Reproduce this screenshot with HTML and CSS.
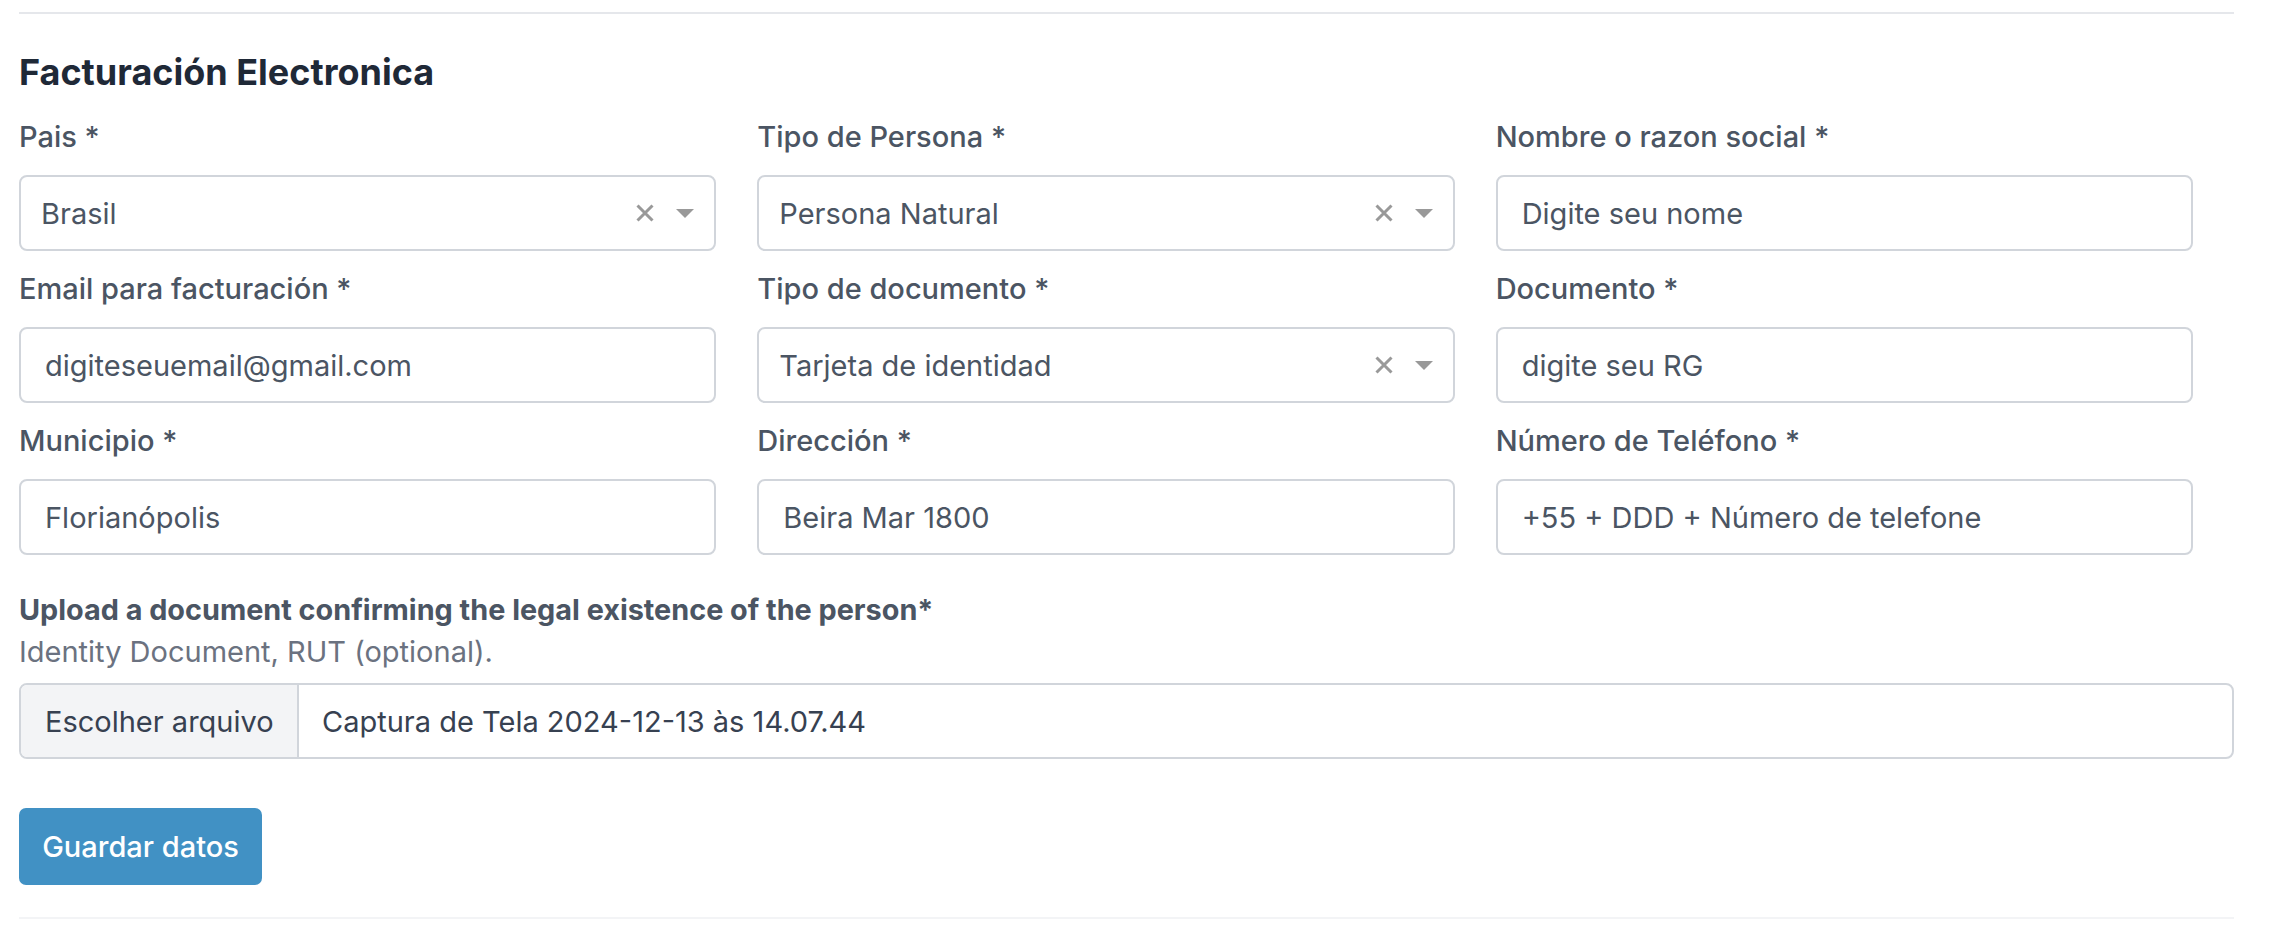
FILE: index.html
```html
<!DOCTYPE html>
<html lang="es">
<head>
    <meta charset="UTF-8">
    <meta name="viewport" content="width=device-width, initial-scale=1.0">
    <title>Facturación Electronica</title>
    <link rel="stylesheet" href="styles.css">
</head>
<body>
    <div class="container">
        <hr class="linea-top">

        <h2>Facturación Electronica</h2>

        <form class="form-factura" onsubmit="return false">
            <div class="grid">
                <!-- fila 1 -->
                <div class="campo">
                    <label>Pais *</label>
                    <div class="select">
                        <span class="select-valor">Brasil</span>
                        <svg class="select-limpiar" viewBox="0 0 18 18"><path d="M1.5 1.5L16.5 16.5M16.5 1.5L1.5 16.5"/></svg>
                        <span class="select-flecha"></span>
                    </div>
                </div>
                <div class="campo">
                    <label>Tipo de Persona *</label>
                    <div class="select">
                        <span class="select-valor">Persona Natural</span>
                        <svg class="select-limpiar" viewBox="0 0 18 18"><path d="M1.5 1.5L16.5 16.5M16.5 1.5L1.5 16.5"/></svg>
                        <span class="select-flecha"></span>
                    </div>
                </div>
                <div class="campo">
                    <label>Nombre o razon social *</label>
                    <input type="text" value="Digite seu nome">
                </div>

                <!-- fila 2 -->
                <div class="campo">
                    <label>Email para facturación *</label>
                    <input type="text" value="digiteseuemail@gmail.com">
                </div>
                <div class="campo">
                    <label>Tipo de documento *</label>
                    <div class="select">
                        <span class="select-valor">Tarjeta de identidad</span>
                        <svg class="select-limpiar" viewBox="0 0 18 18"><path d="M1.5 1.5L16.5 16.5M16.5 1.5L1.5 16.5"/></svg>
                        <span class="select-flecha"></span>
                    </div>
                </div>
                <div class="campo">
                    <label>Documento *</label>
                    <input type="text" value="digite seu RG">
                </div>

                <!-- fila 3 -->
                <div class="campo">
                    <label>Municipio *</label>
                    <input type="text" value="Florianópolis">
                </div>
                <div class="campo">
                    <label>Dirección *</label>
                    <input type="text" value="Beira Mar 1800">
                </div>
                <div class="campo">
                    <label>Número de Teléfono *</label>
                    <input type="text" value="+55 + DDD + Número de telefone">
                </div>
            </div>

            <div class="upload">
                <strong>Upload a document confirming the legal existence of the person*</strong>
                <p>Identity Document, RUT (optional).</p>
                <div class="archivo">
                    <span class="archivo-boton">Escolher arquivo</span>
                    <span class="archivo-nombre">Captura de Tela 2024-12-13 às 14.07.44</span>
                </div>
            </div>

            <button type="submit" class="btn-guardar">Guardar datos</button>
        </form>

        <hr class="linea-bottom">
    </div>
</body>
</html>
```

FILE: styles.css
```css
body {
    font-family: Inter, 'Noto Sans', sans-serif;
    background-color: #ffffff;
    color: #4b5563;
    margin: 0;
    padding: 0;
}

.container {
    width: 2215px;
    padding-left: 19px;
}

.linea-top {
    border: none;
    border-top: 2px solid #e5e7eb;
    margin: 12px 0 0 0;
}

h2 {
    font-size: 36px;
    font-weight: 700;
    line-height: 1.2;
    color: #1f2937;
    margin: 37px 0 0 0;
}

/* Grilla de campos */
.grid {
    display: grid;
    grid-template-columns: repeat(3, 1fr);
    margin-top: 22px;
}

.campo {
    display: flex;
    flex-direction: column;
    padding-right: 41px;
    margin-bottom: 17px;
}

.campo label {
    font-size: 29px;
    font-weight: 500;
    line-height: 42px;
    color: #4b5563;
    margin-bottom: 17px;
}

.campo input,
.select {
    box-sizing: border-box;
    height: 76px;
    border: 2px solid #d1d5db;
    border-radius: 8px;
    font-family: inherit;
    font-size: 29px;
    color: #4b5563;
    background-color: #ffffff;
}

.campo input {
    padding: 0 24px;
    outline: none;
}

.select {
    display: flex;
    align-items: center;
    padding: 0 20px;
}

.select-valor {
    flex: 1;
}

.select-limpiar {
    flex-shrink: 0;
    width: 18px;
    height: 18px;
    margin-right: 22px;
    stroke: #999999;
    stroke-width: 3;
    fill: none;
}

.select-flecha {
    flex-shrink: 0;
    width: 0;
    height: 0;
    border-left: 9px solid transparent;
    border-right: 9px solid transparent;
    border-top: 9px solid #999999;
}

/* Subida de documento */
.upload {
    margin-top: 17px;
}

.upload strong {
    display: block;
    font-size: 28.8px;
    font-weight: 700;
    line-height: 42px;
    color: #4b5563;
}

.upload p {
    font-size: 29px;
    line-height: 42px;
    color: #6b7280;
    margin: 0 0 10px 0;
}

.archivo {
    display: flex;
    height: 76px;
    box-sizing: border-box;
    border: 2px solid #d1d5db;
    border-radius: 8px;
    overflow: hidden;
    font-size: 29px;
    color: #374151;
}

.archivo-boton {
    display: flex;
    align-items: center;
    width: 278px;
    box-sizing: border-box;
    padding-left: 24px;
    background-color: #f3f4f6;
    border-right: 2px solid #d1d5db;
}

.archivo-nombre {
    display: flex;
    align-items: center;
    padding-left: 23px;
}

.btn-guardar {
    display: block;
    margin-top: 49px;
    width: 243px;
    height: 77px;
    border: none;
    border-radius: 7px;
    background-color: #4191c4;
    color: #ffffff;
    font-family: inherit;
    font-size: 29px;
    font-weight: 500;
    cursor: pointer;
}

.linea-bottom {
    border: none;
    border-top: 2px solid #f3f4f6;
    margin: 32px 0 0 0;
}
```
